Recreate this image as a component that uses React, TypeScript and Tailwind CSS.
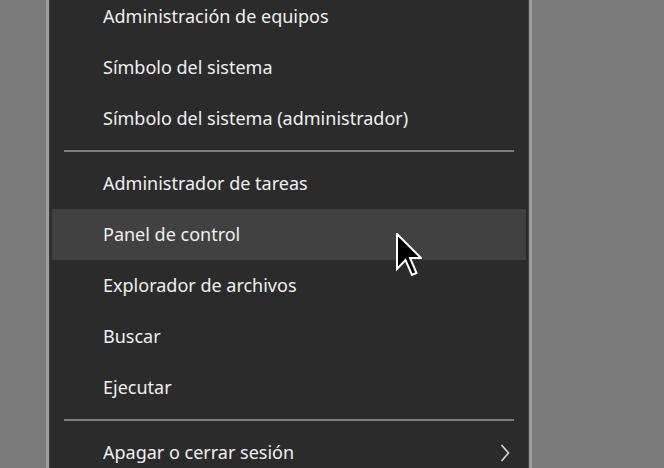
import React from "react";

type Entry = { label: string; hover?: boolean; sub?: boolean } | "sep";

const entries: Entry[] = [
  { label: "Administración de equipos" },
  { label: "Símbolo del sistema" },
  { label: "Símbolo del sistema (administrador)" },
  "sep",
  { label: "Administrador de tareas" },
  { label: "Panel de control", hover: true },
  { label: "Explorador de archivos" },
  { label: "Buscar" },
  { label: "Ejecutar" },
  "sep",
  { label: "Apagar o cerrar sesión", sub: true },
];

function Cursor() {
  return (
    <svg
      className="absolute left-[396px] top-[233px]"
      width="26"
      height="44"
      viewBox="-1 -1 26 44"
    >
      <path
        d="M0 0 L0 35 L8.5 26 L15 41 L19.5 39 L13 24 L24 24 Z"
        fill="#000"
        stroke="#fff"
        strokeWidth="2"
        strokeLinejoin="miter"
      />
    </svg>
  );
}

export default function App() {
  return (
    <div
      className="relative w-[664px] h-[468px] overflow-hidden bg-[#7b7b7b]"
      style={{ fontFamily: '"Noto Sans", "Open Sans", sans-serif' }}
    >
      <div className="ml-[46px] w-[486px] h-full border-l-[3px] border-r-[3px] border-[#9d9d9d]">
        <div className="h-full flex flex-col overflow-hidden bg-[#2b2b2b] border-l border-r border-[#3a3a3a] px-[2px]">
          <div className="-mt-[9px] flex flex-col">
            {entries.map((e, i) =>
              e === "sep" ? (
                <div key={i} className="h-[14px] shrink-0 flex items-center px-[12px]">
                  <div className="h-[2px] w-full bg-[#7d7d7d]" />
                </div>
              ) : (
                <div
                  key={i}
                  className={`h-[51px] shrink-0 flex items-center justify-between pl-[51px] pr-[16px] text-[18px] text-[#f0f0f0] ${
                    e.hover ? "bg-[#414141]" : ""
                  }`}
                >
                  <span>{e.label}</span>
                  {e.sub && (
                    <svg width="10" height="18" viewBox="0 0 10 18">
                      <path d="M1.5 1 L8.5 9 L1.5 17" fill="none" stroke="#d8d8d8" strokeWidth="1.6" />
                    </svg>
                  )}
                </div>
              )
            )}
          </div>
        </div>
      </div>
      <Cursor />
    </div>
  );
}
